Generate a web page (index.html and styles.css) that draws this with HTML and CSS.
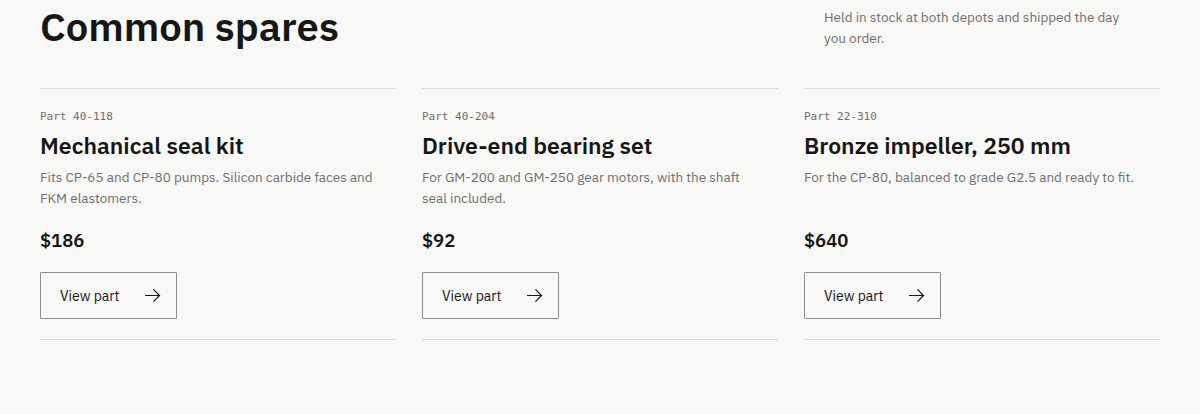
FILE: index.html
```html
<!DOCTYPE html>
<html lang="en">
<head>
<meta charset="utf-8">
<title>Common spares</title>
<link rel="stylesheet" href="styles.css">
</head>
<body>
<main class="page">
  <header class="head">
    <h1 class="head-title">Common spares</h1>
    <p class="head-lede">Held in stock at both depots and shipped the day you order.</p>
  </header>
  <section class="cards">
    <article class="card">
      <div class="card-num">Part 40-118</div>
      <h2 class="card-title">Mechanical seal kit</h2>
      <p class="card-desc">Fits CP-65 and CP-80 pumps. Silicon carbide faces and FKM elastomers.</p>
      <div class="card-price">$186</div>
      <a class="btn" href="#"><span>View part</span>
        <svg class="btn-arrow" viewBox="0 0 18 16" width="17" height="15" aria-hidden="true"><path d="M1 8h15.5M10 1.5L16.5 8L10 14.5" fill="none" stroke="currentColor" stroke-width="1.3"/></svg>
      </a>
    </article>
    <article class="card">
      <div class="card-num">Part 40-204</div>
      <h2 class="card-title">Drive-end bearing set</h2>
      <p class="card-desc">For GM-200 and GM-250 gear motors, with the shaft seal included.</p>
      <div class="card-price">$92</div>
      <a class="btn" href="#"><span>View part</span>
        <svg class="btn-arrow" viewBox="0 0 18 16" width="17" height="15" aria-hidden="true"><path d="M1 8h15.5M10 1.5L16.5 8L10 14.5" fill="none" stroke="currentColor" stroke-width="1.3"/></svg>
      </a>
    </article>
    <article class="card">
      <div class="card-num">Part 22-310</div>
      <h2 class="card-title">Bronze impeller, 250 mm</h2>
      <p class="card-desc">For the CP-80, balanced to grade G2.5 and ready to fit.</p>
      <div class="card-price">$640</div>
      <a class="btn" href="#"><span>View part</span>
        <svg class="btn-arrow" viewBox="0 0 18 16" width="17" height="15" aria-hidden="true"><path d="M1 8h15.5M10 1.5L16.5 8L10 14.5" fill="none" stroke="currentColor" stroke-width="1.3"/></svg>
      </a>
    </article>
  </section>
</main>
</body>
</html>
```
FILE: styles.css
```css
* { box-sizing: border-box; }
html, body { margin: 0; }
body {
  background: #f8f8f6;
  color: #161616;
  font-family: "IBM Plex Sans", Roboto, "Noto Sans", sans-serif;
}
.page {
  padding: 0 40px;
}
.head {
  display: grid;
  grid-template-columns: repeat(3, 1fr);
  column-gap: 26px;
  align-items: start;
  height: 88px;
}
.head-title {
  grid-column: 1 / 3;
  margin: 0;
  padding-top: 1px;
  font-size: 40px;
  line-height: 50px;
  font-weight: 600;
  color: #161616;
}
.head-lede {
  grid-column: 3;
  margin: 7px 0 0 20px;
  max-width: 305px;
  font-size: 13.5px;
  line-height: 21px;
  color: #6f6f6f;
}
.cards {
  display: grid;
  grid-template-columns: repeat(3, 1fr);
  column-gap: 26px;
}
.card {
  display: flex;
  flex-direction: column;
  align-items: flex-start;
  border-top: 1px solid #dcdcd9;
  border-bottom: 1px solid #dcdcd9;
  padding: 20px 0 20px;
}
.card-num {
  font-family: "DejaVu Sans Mono", "Liberation Mono", monospace;
  font-size: 11px;
  line-height: 16px;
  color: #6f6f6f;
}
.card-title {
  margin: 5px 0 0;
  font-size: 23px;
  line-height: 30px;
  font-weight: 600;
  color: #161616;
}
.card-desc {
  flex: 1;
  max-width: 340px;
  margin: 7px 0 0;
  font-size: 13.5px;
  line-height: 21px;
  color: #6f6f6f;
}
.card-price {
  margin-top: 18px;
  font-size: 18.5px;
  line-height: 27px;
  font-weight: 600;
  color: #161616;
}
.btn {
  margin-top: 18px;
  display: flex;
  align-items: center;
  gap: 25px;
  height: 47px;
  padding: 0 15px 0 19px;
  border: 1px solid #8d8d8d;
  border-radius: 1px;
  color: #161616;
  text-decoration: none;
  font-size: 14px;
  font-weight: 400;
}
.btn-arrow {
  display: block;
}
```
